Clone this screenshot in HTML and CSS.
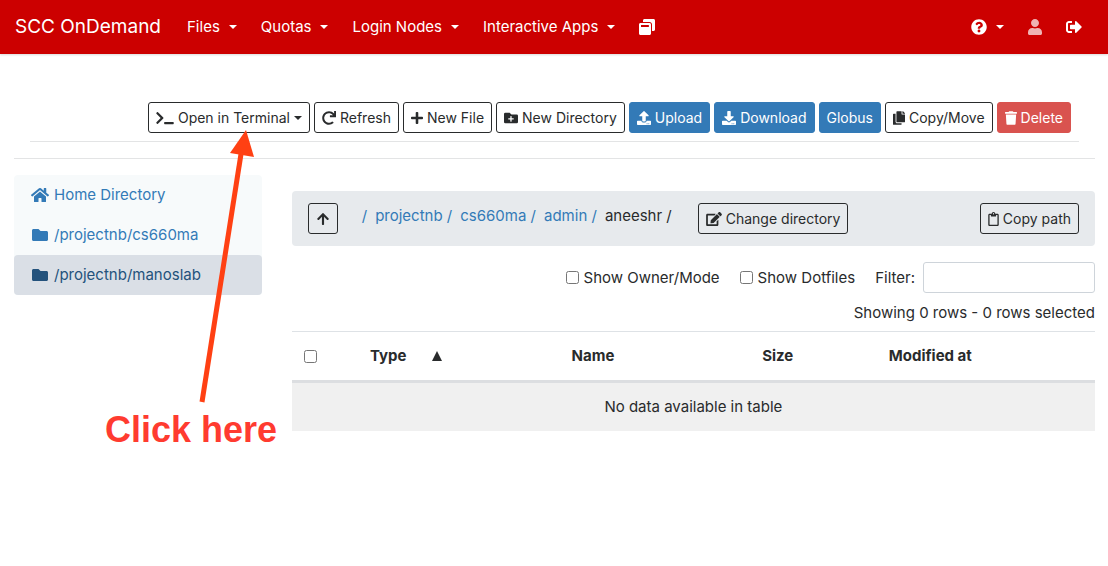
FILE: index.html
```html
<!DOCTYPE html>
<html lang="en">
<head>
<meta charset="utf-8">
<meta name="viewport" content="width=device-width, initial-scale=1">
<title>SCC OnDemand - Files</title>
<link rel="stylesheet" href="styles.css">
</head>
<body>
<header class="navbar">
  <a class="brand" href="#">SCC OnDemand</a>
  <nav class="nav-main" aria-label="Main">
    <button class="nav-link" type="button">Files<span class="caret"></span></button>
    <button class="nav-link" type="button">Quotas<span class="caret"></span></button>
    <button class="nav-link" type="button">Login Nodes<span class="caret"></span></button>
    <button class="nav-link" type="button">Interactive Apps<span class="caret"></span></button>
    <a class="nav-link" href="#" aria-label="My Interactive Sessions"><svg class="icon" viewBox="0 0 512 512"><path d="M512 48v288c0 26.500-21.500 48-48 48h-48V176c0-44.100-35.900-80-80-80H128V48c0-26.500 21.500-48 48-48h288c26.500 0 48 21.500 48 48zM384 176v288c0 26.500-21.500 48-48 48H48c-26.500 0-48-21.500-48-48V176c0-26.500 21.500-48 48-48h288c26.500 0 48 21.500 48 48zm-68 28c0-6.600-5.400-12-12-12H76c-6.600 0-12 5.400-12 12v52h252v-52z"/></svg></a>
  </nav>
  <nav class="nav-user" aria-label="User">
    <button class="nav-link" type="button" aria-label="Help"><svg class="icon" viewBox="0 0 512 512"><path d="M504 256c0 136.997-111.043 248-248 248S8 392.997 8 256C8 119.083 119.043 8 256 8s248 111.083 248 248zM262.655 90c-54.497 0-89.255 22.957-116.549 63.758-3.536 5.286-2.353 12.415 2.715 16.258l34.699 26.310c5.205 3.947 12.621 3.008 16.665-2.122 17.864-22.658 30.113-35.797 57.303-35.797 20.429 0 45.698 13.148 45.698 32.958 0 14.976-12.363 22.667-32.534 33.976C247.128 238.528 216 254.941 216 296v4c0 6.627 5.373 12 12 12h56c6.627 0 12-5.373 12-12v-1.333c0-28.462 83.186-29.647 83.186-106.667 0-58.002-60.165-102-116.531-102zM256 338c-25.365 0-46 20.635-46 46 0 25.364 20.635 46 46 46s46-20.636 46-46c0-25.365-20.635-46-46-46z"/></svg><span class="caret"></span></button>
    <a class="nav-link nav-link-muted" href="#" aria-label="Account"><svg class="icon icon-narrow" viewBox="0 0 448 512"><path d="M224 256c70.700 0 128-57.300 128-128S294.700 0 224 0 96 57.300 96 128s57.300 128 128 128zm89.600 32h-16.700c-22.200 10.200-46.900 16-72.900 16s-50.600-5.800-72.900-16h-16.700C60.200 288 0 348.200 0 422.400V464c0 26.500 21.500 48 48 48h352c26.500 0 48-21.500 48-48v-41.600c0-74.200-60.200-134.400-134.400-134.400z"/></svg></a>
    <a class="nav-link" href="#" aria-label="Log out"><svg class="icon" viewBox="0 0 512 512"><path d="M497 273L329 441c-15 15-41 4.500-41-17v-96H152c-13.300 0-24-10.700-24-24v-96c0-13.300 10.700-24 24-24h136V88c0-21.400 25.900-32 41-17l168 168c9.300 9.400 9.300 24.600 0 34zM192 436v-40c0-6.600-5.400-12-12-12H96c-17.700 0-32-14.300-32-32V160c0-17.700 14.300-32 32-32h84c6.600 0 12-5.400 12-12V76c0-6.600-5.400-12-12-12H96c-53 0-96 43-96 96v192c0 53 43 96 96 96h84c6.600 0 12-5.400 12-12z"/></svg></a>
  </nav>
</header>

<main class="content">
  <div class="toolbar">
    <button class="btn" type="button"><svg class="icon-sm icon-wide" viewBox="0 0 640 512"><path d="M257.981 272.971L63.638 467.314c-9.373 9.373-24.569 9.373-33.941 0L7.029 444.647c-9.357-9.357-9.375-24.522-.04-33.901L161.011 256 6.990 101.255c-9.335-9.379-9.317-24.544.04-33.901l22.667-22.667c9.373-9.373 24.569-9.373 33.941 0L257.981 239.030c9.373 9.372 9.373 24.568 0 33.941zM640 456v-32c0-13.255-10.745-24-24-24H312c-13.255 0-24 10.745-24 24v32c0 13.255 10.745 24 24 24h304c13.255 0 24-10.745 24-24z"/></svg>Open in Terminal<span class="caret"></span></button>
    <button class="btn" type="button"><svg class="icon-sm" viewBox="0 0 512 512"><path d="M500.330 0h-47.410a12 12 0 0 0-12 12.570l4 82.760A247.420 247.420 0 0 0 256 8C119.340 8 7.900 119.530 8 256.190 8.100 393.070 119.100 504 256 504a247.100 247.100 0 0 0 166.180-63.910 12 12 0 0 0 .48-17.430l-34-34a12 12 0 0 0-16.380-.55A176 176 0 1 1 402.100 157.800l-101.530-4.870a12 12 0 0 0-12.570 12v47.410a12 12 0 0 0 12 12h200.330a12 12 0 0 0 12-12V12a12 12 0 0 0-12-12z"/></svg>Refresh</button>
    <button class="btn" type="button"><svg class="icon-sm icon-slim" viewBox="0 0 448 512"><path d="M416 208H272V64c0-17.670-14.330-32-32-32h-32c-17.670 0-32 14.330-32 32v144H32c-17.670 0-32 14.330-32 32v32c0 17.670 14.330 32 32 32h144v144c0 17.670 14.330 32 32 32h32c17.670 0 32-14.330 32-32V304h144c17.670 0 32-14.330 32-32v-32c0-17.670-14.330-32-32-32z"/></svg>New File</button>
    <button class="btn" type="button"><svg class="icon-sm" viewBox="0 0 512 512"><path d="M464,128H272L208,64H48A48,48,0,0,0,0,112V400a48,48,0,0,0,48,48H464a48,48,0,0,0,48-48V176A48,48,0,0,0,464,128ZM359.500,296a16,16,0,0,1-16,16h-64v64a16,16,0,0,1-16,16h-16a16,16,0,0,1-16-16V312h-64a16,16,0,0,1-16-16V280a16,16,0,0,1,16-16h64V200a16,16,0,0,1,16-16h16a16,16,0,0,1,16,16v64h64a16,16,0,0,1,16,16Z"/></svg>New Directory</button>
    <button class="btn btn-primary" type="button"><svg class="icon-sm" viewBox="0 0 512 512"><path d="M296 384h-80c-13.300 0-24-10.700-24-24V192h-87.700c-17.800 0-26.700-21.500-14.100-34.100L242.300 5.700c7.500-7.500 19.800-7.500 27.300 0l152.200 152.200c12.600 12.600 3.700 34.100-14.100 34.100H320v168c0 13.300-10.700 24-24 24zm216-8v112c0 13.300-10.700 24-24 24H24c-13.300 0-24-10.700-24-24V376c0-13.300 10.700-24 24-24h136v8c0 30.900 25.100 56 56 56h80c30.900 0 56-25.100 56-56v-8h136c13.300 0 24 10.700 24 24zm-124 88c0-11-9-20-20-20s-20 9-20 20 9 20 20 20 20-9 20-20zm64 0c0-11-9-20-20-20s-20 9-20 20 9 20 20 20 20-9 20-20z"/></svg>Upload</button>
    <button class="btn btn-primary" type="button"><svg class="icon-sm" viewBox="0 0 512 512"><path d="M216 0h80c13.300 0 24 10.700 24 24v168h87.700c17.800 0 26.700 21.500 14.100 34.100L269.700 378.300c-7.500 7.500-19.800 7.500-27.300 0L90.100 226.100c-12.600-12.600-3.700-34.100 14.100-34.100H192V24c0-13.300 10.700-24 24-24zm296 376v112c0 13.300-10.700 24-24 24H24c-13.300 0-24-10.700-24-24V376c0-13.300 10.700-24 24-24h146.700l49 49c20.100 20.100 52.500 20.100 72.600 0l49-49H488c13.300 0 24 10.700 24 24zm-124 88c0-11-9-20-20-20s-20 9-20 20 9 20 20 20 20-9 20-20zm64 0c0-11-9-20-20-20s-20 9-20 20 9 20 20 20 20-9 20-20z"/></svg>Download</button>
    <button class="btn btn-primary" type="button">Globus</button>
    <button class="btn" type="button"><svg class="icon-sm icon-slim" viewBox="0 0 448 512"><path d="M320 448v40c0 13.255-10.745 24-24 24H24c-13.255 0-24-10.745-24-24V120c0-13.255 10.745-24 24-24h72v296c0 30.879 25.121 56 56 56h168zm0-344V0H152c-13.255 0-24 10.745-24 24v368c0 13.255 10.745 24 24 24h272c13.255 0 24-10.745 24-24V128H344c-13.200 0-24-10.800-24-24zm120.971-31.029L375.029 7.029A24 24 0 0 0 358.059 0H352v96h96v-6.059a24 24 0 0 0-7.029-16.970z"/></svg>Copy/Move</button>
    <button class="btn btn-danger" type="button"><svg class="icon-sm icon-slim" viewBox="0 0 448 512"><path d="M432 32H312l-9.400-18.700A24 24 0 0 0 281.100 0H166.800a23.720 23.720 0 0 0-21.400 13.300L136 32H16A16 16 0 0 0 0 48v32a16 16 0 0 0 16 16h416a16 16 0 0 0 16-16V48a16 16 0 0 0-16-16zM53.200 467a48 48 0 0 0 47.900 45h245.800a48 48 0 0 0 47.900-45L416 128H32z"/></svg>Delete</button>
  </div>

  <div class="columns">
    <nav class="favorites" aria-label="Favorites">
      <a class="favorite" href="#"><svg class="icon icon-home" viewBox="0 0 576 512"><path d="M280.370 148.260L96 300.110V464a16 16 0 0 0 16 16l112.060-.29a16 16 0 0 0 15.920-16V368a16 16 0 0 1 16-16h64a16 16 0 0 1 16 16v95.640a16 16 0 0 0 16 16.050L464 480a16 16 0 0 0 16-16V300L295.670 148.260a12.190 12.190 0 0 0-15.300 0zM571.600 251.470L488 182.560V44.050a12 12 0 0 0-12-12h-56a12 12 0 0 0-12 12v72.610L318.470 43a48 48 0 0 0-61 0L4.340 251.470a12 12 0 0 0-1.600 16.900l25.500 31A12 12 0 0 0 45.150 301l235.220-193.740a12.190 12.190 0 0 1 15.300 0L530.900 301a12 12 0 0 0 16.900-1.600l25.500-31a12 12 0 0 0-1.700-16.930z"/></svg>Home Directory</a>
      <a class="favorite" href="#"><svg class="icon icon-home" viewBox="0 0 512 512"><path d="M464 128H272l-64-64H48C21.490 64 0 85.490 0 112v288c0 26.510 21.490 48 48 48h416c26.510 0 48-21.490 48-48V176c0-26.510-21.490-48-48-48z"/></svg>/projectnb/cs660ma</a>
      <a class="favorite favorite-active" href="#" aria-current="page"><svg class="icon icon-home" viewBox="0 0 512 512"><path d="M464 128H272l-64-64H48C21.490 64 0 85.490 0 112v288c0 26.510 21.490 48 48 48h416c26.510 0 48-21.490 48-48V176c0-26.510-21.490-48-48-48z"/></svg>/projectnb/manoslab</a>
    </nav>

    <section class="browser">
      <div class="pathbar">
        <button class="btn" type="button" aria-label="Parent directory"><svg class="icon-sm icon-slim" viewBox="0 0 448 512"><path d="M34.900 289.500l-22.200-22.200c-9.400-9.400-9.400-24.600 0-33.900L207 39c9.400-9.400 24.600-9.400 33.900 0l194.300 194.300c9.400 9.400 9.400 24.600 0 33.900L413 289.400c-9.500 9.500-25 9.300-34.300-.4L264 168.600V456c0 13.300-10.700 24-24 24h-32c-13.300 0-24-10.700-24-24V168.600L69.200 289.100c-9.300 9.800-24.800 10-34.300.4z"/></svg></button>
        <ol class="crumbs">
          <li><a href="#">/</a></li>
          <li><a href="#">projectnb /</a></li>
          <li><a href="#">cs660ma /</a></li>
          <li><a href="#">admin /</a></li>
          <li>aneeshr /</li>
        </ol>
        <button class="btn" type="button"><svg class="icon-sm icon-edit" viewBox="0 0 576 512"><path d="M402.600 83.200l90.200 90.200c3.800 3.800 3.800 10 0 13.800L274.400 405.600l-92.800 10.300c-12.400 1.400-22.900-9.100-21.500-21.500l10.300-92.800L388.800 83.200c3.800-3.800 10-3.800 13.800 0zm162-22.900l-48.800-48.800c-15.200-15.200-39.900-15.200-55.200 0l-35.400 35.400c-3.800 3.800-3.800 10 0 13.800l90.200 90.200c3.800 3.800 10 3.800 13.800 0l35.400-35.400c15.200-15.300 15.200-40 0-55.200zM384 346.200V448H64V128h229.800c3.200 0 6.200-1.300 8.500-3.500l40-40c7.600-7.600 2.200-20.500-8.500-20.500H48C21.500 64 0 85.500 0 112v352c0 26.500 21.500 48 48 48h352c26.500 0 48-21.500 48-48V306.200c0-10.700-12.900-16-20.500-8.500l-40 40c-2.200 2.300-3.500 5.300-3.500 8.500z"/></svg>Change directory</button>
        <button class="btn btn-end" type="button"><svg class="icon-sm icon-clip" viewBox="0 0 384 512"><path d="M336 64h-80c0-35.300-28.700-64-64-64s-64 28.700-64 64H48C21.500 64 0 85.500 0 112v352c0 26.500 21.500 48 48 48h288c26.500 0 48-21.500 48-48V112c0-26.500-21.500-48-48-48zM192 40c13.300 0 24 10.700 24 24s-10.700 24-24 24-24-10.700-24-24 10.700-24 24-24zm144 418c0 3.300-2.700 6-6 6H54c-3.300 0-6-2.700-6-6V118c0-3.300 2.700-6 6-6h42v36c0 6.600 5.400 12 12 12h168c6.600 0 12-5.400 12-12v-36h42c3.300 0 6 2.700 6 6z"/></svg>Copy path</button>
      </div>

      <div class="filters">
        <label class="check"><input type="checkbox">Show Owner/Mode</label>
        <label class="check"><input type="checkbox">Show Dotfiles</label>
        <label class="filter">Filter:<input class="filter-input" type="text"></label>
      </div>
      <p class="status">Showing 0 rows - 0 rows selected</p>

      <table class="files">
        <thead>
          <tr>
            <th class="col-select"><input type="checkbox" aria-label="Select all"></th>
            <th class="col-type"><span class="sorted">Type<svg class="sort" viewBox="0 0 12 12"><path d="M6 1L11 11H1z"/></svg></span></th>
            <th class="col-name">Name</th>
            <th class="col-size">Size</th>
            <th class="col-modified">Modified at</th>
            <th class="col-rest"></th>
          </tr>
        </thead>
        <tbody>
          <tr><td colspan="6">No data available in table</td></tr>
        </tbody>
      </table>
    </section>
  </div>
</main>

<svg class="arrow" viewBox="0 0 60 280" aria-hidden="true"><path d="M12 272L51 24" class="arrow-line"/><path d="M56 0L64 27L40 23z" class="arrow-head"/></svg>
<p class="callout">Click here</p>
</body>
</html>
```
FILE: styles.css
```css
* { box-sizing: border-box; }

body {
  position: relative;
  min-height: 100vh;
  margin: 0;
  background: #fff;
  color: #292b2c;
  font-family: Inter, "Liberation Sans", sans-serif;
  font-size: 15px;
  line-height: 24px;
}

a { color: #337ab7; text-decoration: none; }
button, input { font: inherit; color: inherit; }
svg { fill: currentColor; }

.navbar {
  display: flex;
  align-items: center;
  justify-content: space-between;
  height: 54px;
  padding: 0 26px 1px 15px;
  background: #c00;
  color: #fff;
  box-shadow: 0 1px 2px rgba(0, 0, 0, 0.15);
}
.brand { margin-right: 26px; color: #fff; font-size: 19px; }
.nav-main, .nav-user { display: flex; align-items: center; gap: 24px; }
.nav-main { margin-right: auto; }
.nav-link {
  display: flex;
  align-items: center;
  gap: 9px;
  padding: 0;
  border: 0;
  background: none;
  color: #fff;
}
.nav-link-muted { opacity: 0.7; }

.caret {
  border: 4px solid transparent;
  border-top-color: currentColor;
  border-bottom: 0;
}

.icon { flex: none; width: 16px; height: 16px; }
.icon-narrow { width: 14px; }
.icon-home { width: 18px; height: 16px; }
.icon-sm { flex: none; width: 14px; height: 14px; }
.icon-wide { width: 18px; }
.icon-slim { width: 12px; }
.icon-edit { width: 16px; }
.icon-clip { width: 11px; }

.content { padding: 48px 13px 0 14px; }

.toolbar {
  display: flex;
  justify-content: flex-end;
  gap: 4px;
  margin: 0 16px;
  padding: 0 8px 8px 0;
  border-bottom: 1px solid #e3e4e5;
}

.btn {
  display: flex;
  align-items: center;
  justify-content: center;
  gap: 4px;
  min-width: 30px;
  height: 31px;
  padding: 0 7px;
  border: 1px solid #292b2c;
  border-radius: 3px;
  background: transparent;
  font-size: 14px;
  white-space: nowrap;
}
.btn-primary { background: #337ab7; border-color: #337ab7; color: #fff; }
.btn-danger { background: #d9534f; border-color: #d9534f; color: #fff; }
.btn-end { margin-left: auto; }

.columns {
  display: grid;
  grid-template-columns: repeat(12, minmax(0, 1fr));
  align-items: start;
  column-gap: 30px;
  margin-top: 16px;
  padding-top: 16px;
  border-top: 1px solid #e3e4e5;
}

.favorites {
  grid-column: span 3;
  border-radius: 4px;
  background: #f7fafb;
}
.favorite {
  display: flex;
  align-items: center;
  gap: 5px;
  height: 40px;
  padding: 0 17px;
  border-radius: 4px;
}
.favorite-active { background: #dadfe6; color: #23527c; }

.browser { grid-column: span 9; padding-top: 16px; }

.pathbar {
  display: flex;
  align-items: center;
  padding: 12px 16px;
  border-radius: 4px;
  background: #e7eaed;
}
.crumbs {
  display: flex;
  gap: 8px;
  margin: 0 26px 0 24px;
  padding: 0 0 6px;
  list-style: none;
}

.filters {
  display: flex;
  align-items: center;
  justify-content: flex-end;
  gap: 20px;
  margin-top: 16px;
}
.check, .filter { display: flex; align-items: center; gap: 5px; }
.filter { gap: 8px; }
input[type="checkbox"] { width: 13px; height: 13px; margin: 0; }
.filter-input {
  width: 172px;
  height: 31px;
  padding: 4px 8px;
  border: 1px solid #ced4da;
  border-radius: 3px;
}

.status { margin: 8px 0 6px; text-align: right; }

.files {
  width: 100%;
  border-collapse: collapse;
  table-layout: fixed;
  text-align: center;
}
.files th { height: 50px; padding: 0 12px; border-top: 1px solid #dee2e6; border-bottom: 3px solid #dcdee1; font-weight: 700; }
.files td { height: 49px; padding: 0; background: #f0f0f0; }
.files .col-select { width: 8%; text-align: left; }
.files .col-type { width: 13%; padding-left: 14px; text-align: left; }
.col-name { width: 33%; }
.col-size { width: 13%; }
.col-modified { width: 25%; }
.col-rest { width: 8%; }
.col-select input { display: block; }
.sorted { display: flex; align-items: center; gap: 24px; }
.sort { width: 12px; height: 12px; }

.arrow {
  position: absolute;
  top: 130px;
  left: 190px;
  width: 60px;
  height: 280px;
  overflow: visible;
  pointer-events: none;
}
.arrow-line { fill: none; stroke: #ff4013; stroke-width: 5; }
.arrow-head { fill: #ff4013; }
.callout {
  position: absolute;
  top: 410px;
  left: 105px;
  margin: 0;
  color: #ff3b30;
  font-family: "Liberation Sans", Arial, sans-serif;
  font-size: 36px;
  font-weight: 700;
  line-height: 40px;
}
```
